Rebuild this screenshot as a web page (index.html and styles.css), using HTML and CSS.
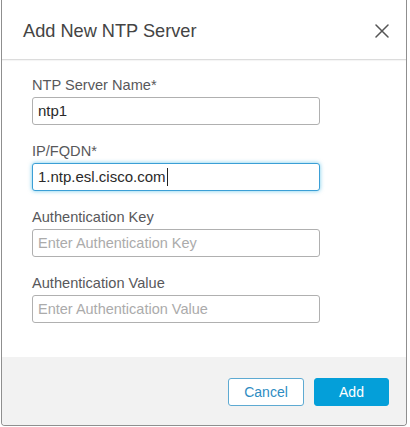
FILE: index.html
```html
<!DOCTYPE html>
<html lang="en">
<head>
<meta charset="utf-8">
<title>Add New NTP Server</title>
<link rel="stylesheet" href="styles.css">
</head>
<body>
<div class="dialog" role="dialog" aria-labelledby="dlg-title">
  <div class="dialog-header">
    <h2 class="dialog-title" id="dlg-title">Add New NTP Server</h2>
    <button class="close-btn" type="button" aria-label="Close">
      <svg width="14" height="14" viewBox="0 0 14 14" aria-hidden="true">
        <path d="M1 1 L13 13 M13 1 L1 13" stroke="#555" stroke-width="1.5" fill="none" stroke-linecap="round"/>
      </svg>
    </button>
  </div>
  <div class="dialog-body">
    <div class="field">
      <label class="field-label">NTP Server Name*</label>
      <div class="input">ntp1</div>
    </div>
    <div class="field">
      <label class="field-label">IP/FQDN*</label>
      <div class="input focused">1.ntp.esl.cisco.com<span class="caret"></span></div>
    </div>
    <div class="field">
      <label class="field-label">Authentication Key</label>
      <div class="input placeholder">Enter Authentication Key</div>
    </div>
    <div class="field">
      <label class="field-label">Authentication Value</label>
      <div class="input placeholder">Enter Authentication Value</div>
    </div>
  </div>
  <div class="dialog-footer">
    <button class="btn btn-secondary" type="button">Cancel</button>
    <button class="btn btn-primary" type="button">Add</button>
  </div>
</div>
</body>
</html>
```

FILE: styles.css
```css
* {
  box-sizing: border-box;
}

html, body {
  margin: 0;
  padding: 0;
  background: #ffffff;
}

body {
  font-family: "Liberation Sans", Arial, Helvetica, sans-serif;
  color: #333;
}

.dialog {
  width: 406px;
  margin-left: 1px;
  background: #ffffff;
  border: 1px solid #8f8f8f;
  border-top: none;
  border-radius: 0 0 4px 4px;
  overflow: hidden;
}

.dialog-header {
  height: 60px;
  padding: 4px 16px 1px 21px;
  display: flex;
  align-items: center;
  justify-content: space-between;
  border-bottom: 1px solid #dcdcdc;
  box-shadow: 0 1px 1px rgba(0, 0, 0, 0.04);
}

.dialog-title {
  margin: 0;
  font-size: 18.2px;
  font-weight: normal;
  color: #444;
  line-height: 22px;
}

.close-btn {
  width: 16px;
  height: 16px;
  padding: 0;
  margin: 0;
  border: none;
  background: none;
  display: flex;
  align-items: center;
  justify-content: center;
}

.dialog-body {
  padding: 17px 30px 34px 30px;
  display: flex;
  flex-direction: column;
  gap: 18px;
}

.field {
  display: flex;
  flex-direction: column;
}

.field-label {
  font-size: 14.6px;
  line-height: 17px;
  color: #58585b;
  margin-bottom: 3px;
}

.input {
  width: 288px;
  height: 28px;
  border: 1px solid #b0b0b0;
  border-radius: 3px;
  padding: 0 5px;
  font-size: 15px;
  line-height: 26px;
  color: #2a2a2a;
  background: #fff;
  display: flex;
  align-items: center;
  white-space: nowrap;
}

.input.focused {
  border-color: #3b9fd6;
  box-shadow: 0 0 4px rgba(4, 159, 217, 0.55);
}

.input.placeholder {
  color: #ababab;
  font-size: 14.5px;
}

.caret {
  display: inline-block;
  width: 1px;
  height: 18px;
  margin-left: 1px;
  background: #222;
}

.dialog-footer {
  background: #f2f2f2;
  padding: 21px 17px 19px;
  display: flex;
  justify-content: flex-end;
  gap: 10px;
}

.btn {
  height: 28px;
  border-radius: 3px;
  font-family: "Liberation Sans", Arial, Helvetica, sans-serif;
  font-size: 14px;
  padding: 0;
  cursor: pointer;
}

.btn-secondary {
  width: 76px;
  background: #ffffff;
  border: 1px solid #5eaad2;
  color: #2e8cc2;
}

.btn-primary {
  width: 75px;
  background: #049fd9;
  border: 1px solid #049fd9;
  color: #ffffff;
}
```
